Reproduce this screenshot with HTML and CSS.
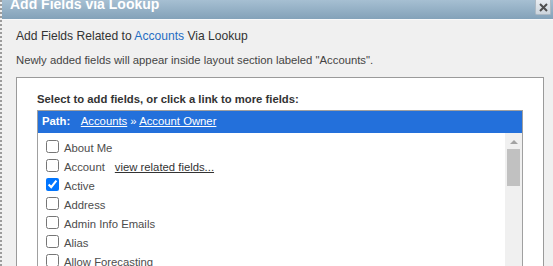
FILE: index.html
```html
<!DOCTYPE html>
<html lang="en">
<head>
    <meta charset="utf-8">
    <meta content="initial-scale=1, width=device-width" name="viewport">
    <title>Add Fields via Lookup</title>
    <link rel="stylesheet" href="styles.css">
</head>

<body>
    <div class="dialog">
        <div class="titlebar">
            <h1>Add Fields via Lookup</h1>
            <button class="close" title="Close">
                <svg width="9" height="9" viewBox="0 0 9 9"><path d="M1 1L8 8M8 1L1 8" stroke="#4f4f4f" stroke-width="2"/></svg>
            </button>
        </div>
        <div class="content">
            <h2>Add Fields Related to <a href="#">Accounts</a> Via Lookup</h2>
            <p class="note">Newly added fields will appear inside layout section labeled "Accounts".</p>
            <div class="picker">
                <p class="prompt">Select to add fields, or click a link to more fields:</p>
                <div class="fields">
                    <div class="path">
                        <strong>Path:</strong>
                        <a href="#">Accounts</a> &raquo; <a href="#">Account Owner</a>
                    </div>
                    <div class="listing">
                        <ul class="list">
                            <li><input type="checkbox" id="f1"><label for="f1">About Me</label></li>
                            <li><input type="checkbox" id="f2"><label for="f2">Account</label><a class="related" href="#">view related fields...</a></li>
                            <li><input type="checkbox" id="f3" checked><label for="f3">Active</label></li>
                            <li><input type="checkbox" id="f4"><label for="f4">Address</label></li>
                            <li><input type="checkbox" id="f5"><label for="f5">Admin Info Emails</label></li>
                            <li><input type="checkbox" id="f6"><label for="f6">Alias</label></li>
                            <li><input type="checkbox" id="f7"><label for="f7">Allow Forecasting</label></li>
                            <li><input type="checkbox" id="f8"><label for="f8">Call Center</label></li>
                        </ul>
                        <div class="scrollbar">
                            <span class="arrow"></span>
                            <span class="thumb"></span>
                        </div>
                    </div>
                </div>
            </div>
        </div>
    </div>
</body>
</html>
```

FILE: styles.css
```css
:root {
    box-sizing: border-box;
}
:root * {
    box-sizing: inherit;
}
body {
    background-color: #F0F0F0;
    color: #333;
    font-family: "Liberation Sans", Arial, sans-serif;
    margin: 0;
    overflow: hidden;
}
.dialog {
    border-left: 2px dotted #9C9C9C;
    height: 100vh;
    overflow: hidden;
}
.titlebar {
    background: linear-gradient(#A6BFD2, #83A2B9);
    border-bottom: 1px solid #F8F9FA;
    display: flex;
    height: 20px;
    overflow: hidden;
}
.titlebar h1 {
    color: #FFF;
    font-size: 14px;
    font-weight: bold;
    line-height: 19px;
    margin: -5px 0 0 8px;
}
.close {
    align-items: center;
    align-self: flex-start;
    background: linear-gradient(#E9EDF1, #CCD5DD);
    border: 1px solid #AEBAC4;
    border-radius: 0 0 2px 2px;
    border-top: none;
    display: flex;
    height: 15px;
    justify-content: center;
    margin: 0 2px 0 auto;
    padding: 0;
    width: 16px;
}
.content {
    padding: 9px 0 0 14px;
}
h2 {
    font-size: 12.1px;
    font-weight: normal;
    line-height: 15px;
    margin: 0;
}
h2 a {
    color: #1F6DC3;
    text-decoration: none;
}
.note {
    color: #444;
    font-size: 11.3px;
    line-height: 14px;
    margin: 9px 0 0;
}
.picker {
    background-color: #FFF;
    border: 1px solid #9A9A9A;
    margin: 10px 0 0;
    padding: 14px 20px 0;
    width: 528px;
}
.prompt {
    font-size: 11.3px;
    font-weight: bold;
    line-height: 14px;
    margin: 0 0 4px;
}
.fields {
    border: 1px solid #A0A0A0;
    border-bottom: none;
}
.path {
    background-color: #2370DB;
    color: #FFF;
    font-size: 11.3px;
    height: 22px;
    line-height: 20px;
    padding: 0 0 2px 4px;
}
.path strong {
    margin-right: 8px;
}
.path a {
    color: #FFF;
}
.listing {
    display: flex;
}
.list {
    color: #4D4D4D;
    flex: 1;
    font-size: 11.3px;
    list-style: none;
    margin: 0;
    padding: 4px 0 0;
}
.list li {
    align-items: center;
    display: flex;
    height: 19px;
}
.list input {
    height: 13px;
    margin: 0 5px 0 8px;
    width: 13px;
}
.list label {
    line-height: 13px;
    padding-top: 4px;
}
.related {
    color: #333;
    line-height: 13px;
    margin-left: 10px;
    padding-top: 4px;
}
.scrollbar {
    align-items: center;
    background-color: #F0F0F0;
    display: flex;
    flex-direction: column;
    width: 17px;
}
.arrow {
    border-bottom: 4px solid #A3A3A3;
    border-left: 4px solid transparent;
    border-right: 4px solid transparent;
    margin: 7px 0 5px;
}
.thumb {
    background-color: #C1C1C1;
    height: 37px;
    width: 13px;
}
```
